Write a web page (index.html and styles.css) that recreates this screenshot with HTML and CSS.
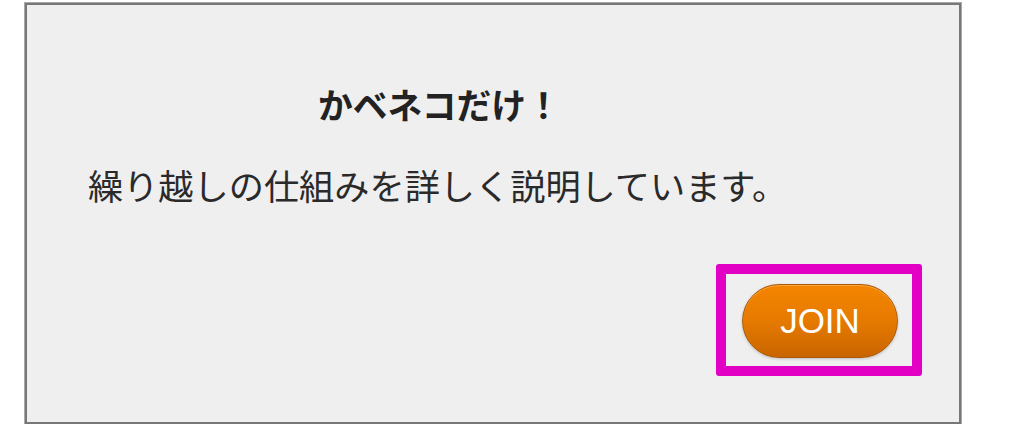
FILE: index.html
```html
<!DOCTYPE html>
<html lang="ja">
<head>
<meta charset="utf-8">
<link rel="stylesheet" href="styles.css">
</head>
<body>
<div class="panel">
  <h1 class="title">かベネコだけ！</h1>
  <p class="desc">繰り越しの仕組みを詳しく説明しています。</p>
  <div class="actions">
    <div class="highlight">
      <button class="join">JOIN</button>
    </div>
  </div>
</div>
</body>
</html>
```

FILE: styles.css
```css
html, body {
  margin: 0;
  padding: 0;
  background: #ffffff;
}
.panel {
  box-sizing: border-box;
  width: 936px;
  height: 421px;
  margin: 3px 0 0 25px;
  background: #efefef;
  border: 2px solid #777777;
  box-shadow: 0 0 0 1px #a9a9a9;
  display: flex;
  flex-direction: column;
  font-family: "Noto Sans CJK JP", "Noto Sans", sans-serif;
  color: #222222;
}
.title {
  margin: 77px 0 0 291px;
  font-size: 34.8px;
  line-height: 44px;
  font-weight: 700;
}
.desc {
  margin: 37px 0 0 61px;
  font-size: 35.2px;
  line-height: 44px;
  font-weight: 400;
  color: #2a2a2a;
}
.actions {
  display: flex;
  justify-content: flex-end;
  margin-top: 57px;
  padding-right: 37px;
}
.highlight {
  border: 10px solid #e200c4;
  border-radius: 3px;
  padding: 10px 14px 8px 16px;
}
.join {
  display: block;
  box-sizing: border-box;
  width: 156px;
  height: 74px;
  border-radius: 37px;
  border: 1px solid #a85a08;
  background: linear-gradient(to bottom, #f58500 0%, #e67a00 50%, #c96500 100%);
  box-shadow: inset 0 1px 0 rgba(255, 200, 120, 0.5), 0 1px 3px rgba(0, 0, 0, 0.2);
  color: #ffffff;
  font-family: "Liberation Sans", Arial, sans-serif;
  font-size: 35px;
  font-weight: 400;
  padding: 0;
  line-height: 72px;
  text-align: center;
}
```
